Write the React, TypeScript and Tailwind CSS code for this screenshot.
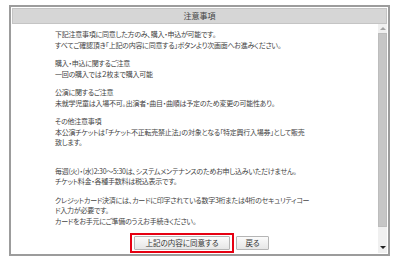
const paragraphs: { lines: string[]; gap: string }[] = [
  {
    lines: [
      "下記注意事項に同意した方のみ、購入・申込が可能です。",
      "すべてご確認頂き「上記の内容に同意する」ボタンより次画面へお進みください。",
    ],
    gap: "mb-[8px]",
  },
  {
    lines: ["購入・申込に関するご注意", "一回の購入では２枚まで購入可能"],
    gap: "mb-[8px]",
  },
  {
    lines: [
      "公演に関するご注意",
      "未就学児童は入場不可。出演者・曲目・曲順は予定のため変更の可能性あり。",
    ],
    gap: "mb-[8px]",
  },
  {
    lines: [
      "その他注意事項",
      "本公演チケットは「チケット不正転売禁止法」の対象となる「特定興行入場券」として販売",
      "致します。",
    ],
    gap: "mb-[18px]",
  },
  {
    lines: [
      "毎週(火)・(水)2:30～5:30は、システムメンテナンスのためお申し込みいただけません。",
      "チケット料金・各種手数料は税込表示です。",
    ],
    gap: "mb-[8px]",
  },
  {
    lines: [
      "クレジットカード決済には、カードに印字されている数字3桁または4桁のセキュリティコー",
      "ド入力が必要です。",
      "カードをお手元にご準備のうえお手続きください。",
    ],
    gap: "mb-[7px]",
  },
];

export default function App() {
  return (
    <div className="w-[400px] h-[260px] bg-white pt-[5px] pl-[9px] font-['Noto_Sans_CJK_JP',sans-serif] text-[#444]">
      <div className="w-[381px] h-[251px] border-2 border-[#9c9c9c] p-px flex flex-col">
        {/* Header */}
        <div className="h-[16px] shrink-0 bg-[#d6d6d6] border border-[#c4c4c4] flex items-center justify-center text-[8px] leading-none text-[#444]">
          注意事項
        </div>

        <div className="flex-1 flex min-h-0">
          {/* Body */}
          <div className="flex-1 pl-[43px] pt-[5px] text-[7px] leading-[10.5px] tracking-[-0.25px] [font-feature-settings:'palt']">
            {paragraphs.map((p, i) => (
              <div key={i} className={p.gap}>
                {p.lines.map((line, j) => (
                  <div key={j} className="whitespace-nowrap">
                    {line}
                  </div>
                ))}
              </div>
            ))}

            <div className="flex items-center justify-center gap-[2px] pr-[34px] tracking-normal">
              <span className="border-2 border-[#e60012] px-[2px] py-px">
                <button className="block h-[14px] w-[96px] bg-gradient-to-b from-[#fbfbfb] to-[#e6e6e6] border border-[#b5b5b5] rounded-[1px] text-[7.5px] leading-none text-[#333]">
                  上記の内容に同意する
                </button>
              </span>
              <button className="block h-[14px] w-[33px] bg-gradient-to-b from-[#fbfbfb] to-[#e6e6e6] border border-[#b5b5b5] rounded-[1px] text-[7.5px] leading-none text-[#333]">
                戻る
              </button>
            </div>
          </div>

          {/* Scrollbar */}
          <div className="w-[9px] flex flex-col bg-[#f0f0f0]">
            <div className="h-[9px] flex items-center justify-center">
              <div className="w-0 h-0 border-l-[3px] border-r-[3px] border-b-[3px] border-l-transparent border-r-transparent border-b-[#a3a3a3]" />
            </div>
            <div className="h-[194px] bg-[#c6c6c6] border border-[#bdbdbd]" />
            <div className="flex-1" />
            <div className="h-[12px] flex items-center justify-center">
              <div className="w-0 h-0 border-l-[3px] border-r-[3px] border-t-[3px] border-l-transparent border-r-transparent border-t-[#222]" />
            </div>
          </div>
        </div>
      </div>
    </div>
  );
}
